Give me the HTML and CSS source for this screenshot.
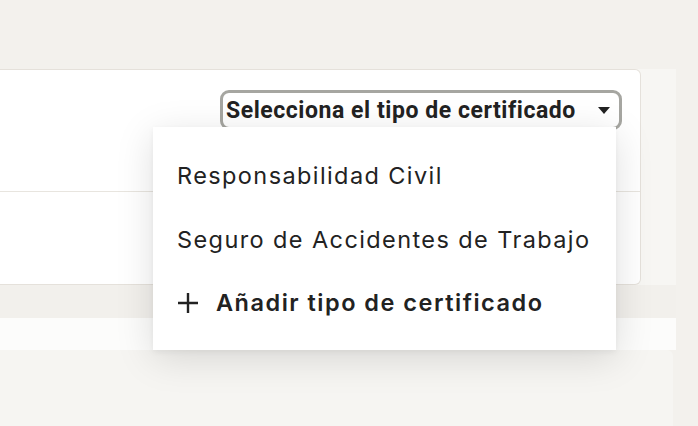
FILE: index.html
```html
<!DOCTYPE html>
<html lang="es">
<head>
<meta charset="utf-8">
<link rel="stylesheet" href="styles.css">
</head>
<body>
<div class="page">
  <div class="outer">
    <div class="card">
      <div class="row row-top">
        <div class="select-wrap">
          <button class="select" type="button">
            <span class="select-label">Selecciona el tipo de certificado</span>
            <span class="caret"></span>
          </button>
          <div class="menu">
            <div class="menu-item first">Responsabilidad Civil</div>
            <div class="menu-item">Seguro de Accidentes de Trabajo</div>
            <div class="menu-item add">
              <svg class="plus" width="22" height="22" viewBox="0 0 22 22"><path d="M11 1v20M1 11h20" stroke="#222" stroke-width="2.4" fill="none"/></svg>
              <span>Añadir tipo de certificado</span>
            </div>
          </div>
        </div>
      </div>
      <div class="row row-bottom"></div>
    </div>
    <div class="band-gray"></div>
    <div class="band-white"></div>
  </div>
  <div class="lower"></div>
</div>
</body>
</html>
```
FILE: styles.css
```css
* { box-sizing: border-box; }
html, body { margin: 0; padding: 0; }
body {
  background: #f3f1ed;
  font-family: "Inter", "Liberation Sans", sans-serif;
  color: #222;
  width: 698px;
  height: 426px;
  overflow: hidden;
}
.page {
  padding-top: 69px;
}
.outer {
  width: 676px;
  background: #f7f6f3;
}
.card {
  width: 641px;
  background: #fff;
  border: 1px solid #e5e1db;
  border-left: none;
  border-radius: 0 6px 6px 0;
}
.row-top {
  height: 122px;
  border-bottom: 1px solid #e8e5df;
  display: flex;
  justify-content: flex-end;
  align-items: flex-start;
  padding: 20px 18px 0 0;
}
.row-bottom {
  height: 92px;
}
.select-wrap {
  position: relative;
}
.select {
  display: flex;
  align-items: center;
  width: 402px;
  height: 40px;
  padding: 0 0 0 3px;
  border: 3px solid #a6a6a1;
  border-radius: 9px;
  background: #fff;
  font-family: "Roboto", "Liberation Sans", sans-serif;
  font-weight: 700;
  font-size: 23px;
  color: #222;
  cursor: pointer;
}
.select-label {
  flex: 1;
  text-align: left;
  letter-spacing: 0.55px;
  white-space: nowrap;
}
.caret {
  width: 0;
  height: 0;
  border-left: 6px solid transparent;
  border-right: 6px solid transparent;
  border-top: 7px solid #222;
  margin-right: 9px;
}
.menu {
  position: absolute;
  left: -67px;
  top: 37px;
  width: 463px;
  height: 223px;
  background: #fff;
  box-shadow: 0 8px 36px rgba(0, 0, 0, 0.13), 0 2px 6px rgba(0, 0, 0, 0.05);
  padding-top: 30px;
  z-index: 5;
}
.menu-item {
  height: 65px;
  padding-left: 24px;
  font-size: 23.5px;
  letter-spacing: 1.4px;
  line-height: 38px;
  color: #222;
  white-space: nowrap;
}
.menu-item.first {
  height: 64px;
}
.menu-item.add {
  height: 56px;
  display: flex;
  align-items: center;
  gap: 17px;
  font-weight: 600;
  letter-spacing: 1.5px;
  line-height: 1;
  padding-bottom: 22px;
}
.plus { flex: none; }
.band-gray {
  height: 33px;
  background: #f2f0ec;
}
.band-white {
  height: 32px;
  background: #fcfcfb;
}
.lower {
  width: 673px;
  height: 80px;
  background: #f6f5f2;
  border-radius: 0 6px 0 0;
}
```
